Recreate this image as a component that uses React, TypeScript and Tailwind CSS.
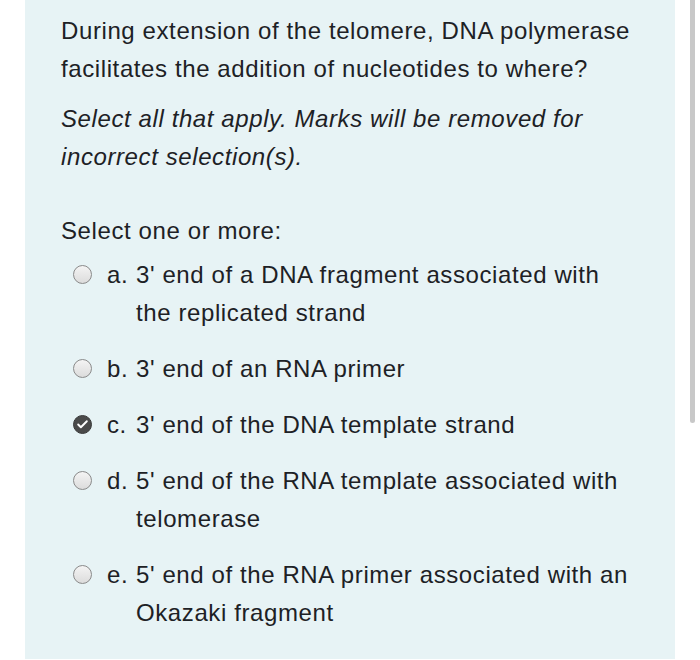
import { Check } from 'lucide-react';

type Option = { label: string; text: string; checked?: boolean };

const options: Option[] = [
  { label: 'a.', text: "3' end of a DNA fragment associated with the replicated strand" },
  { label: 'b.', text: "3' end of an RNA primer" },
  { label: 'c.', text: "3' end of the DNA template strand", checked: true },
  { label: 'd.', text: "5' end of the RNA template associated with telomerase" },
  { label: 'e.', text: "5' end of the RNA primer associated with an Okazaki fragment" },
];

function Radio({ checked }: { checked?: boolean }) {
  if (checked) {
    return (
      <span className="flex h-[19px] w-[19px] items-center justify-center rounded-full border border-[#3a3a3a] bg-[#4a4a4a]">
        <Check className="h-[13px] w-[13px] text-white" strokeWidth={3.5} />
      </span>
    );
  }
  return (
    <span className="block h-[19px] w-[19px] rounded-full border border-[#8a8a8a] bg-gradient-to-b from-[#f4f4f4] to-[#dcdcdc]" />
  );
}

export default function App() {
  return (
    <div className="relative h-[660px] w-[700px] bg-white" style={{ fontFamily: '"Liberation Sans", Arial, sans-serif' }}>
      <div className="ml-[25px] h-[659px] w-[650px] bg-[#e7f3f5] pl-[36px] pr-[34px] pt-[12px] text-[24px] leading-[38px] tracking-[0.6px] text-[#1d2125]">
        <p>During extension of the telomere, DNA polymerase facilitates the addition of nucleotides to where?</p>
        <p className="mt-[12px] italic">Select all that apply. Marks will be removed for incorrect selection(s).</p>

        <p className="mt-[36px]">Select one or more:</p>

        <div className="mt-[6px] flex flex-col gap-[18px] pl-[12px]">
          {options.map((o) => (
            <div key={o.label} className="flex items-start">
              <span className="mt-[9px] w-[34px] shrink-0">
                <Radio checked={o.checked} />
              </span>
              <span className="w-[29px] shrink-0">{o.label}</span>
              <span className="flex-1">{o.text}</span>
            </div>
          ))}
        </div>
      </div>
      <div className="absolute left-[690px] top-0 h-[423px] w-[5px] rounded-b-full bg-[#c8c8c8]" />
    </div>
  );
}
